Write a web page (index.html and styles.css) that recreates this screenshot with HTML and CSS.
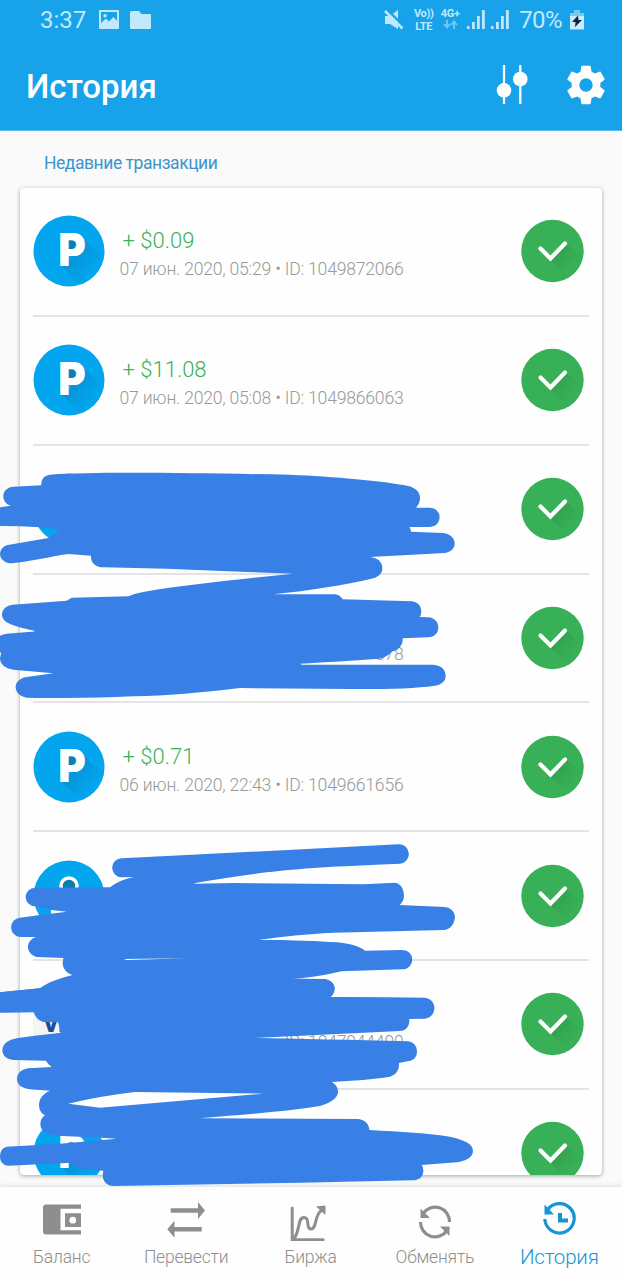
FILE: index.html
```html
<!DOCTYPE html>
<html lang="ru">
<head>
<meta charset="utf-8">
<title>История</title>
<link rel="stylesheet" href="styles.css">
</head>
<body>
<svg class="defs" width="0" height="0" aria-hidden="true">
  <defs>
    <linearGradient id="shade" x1="0" y1="0" x2="1" y2="1">
      <stop offset="0.2" stop-color="#0590d0"/>
      <stop offset="0.7" stop-color="#03a5ee"/>
    </linearGradient>
    <linearGradient id="gshade" x1="0" y1="0" x2="1" y2="1">
      <stop offset="0.1" stop-color="#309f4d"/>
      <stop offset="0.55" stop-color="#38b057"/>
    </linearGradient>
    <clipPath id="disc"><circle cx="36" cy="36" r="35.5"/></clipPath>
    <clipPath id="gdisc"><circle cx="31.500" cy="32" r="31"/></clipPath>
    <symbol id="payeer" viewBox="0 0 72 72">
      <circle cx="36" cy="36" r="35.5" fill="#03a5ee"/>
      <path d="M28 50 L34 51 L48 22 L72 44 V72 H50Z" fill="url(#shade)" clip-path="url(#disc)"/>
      <path d="M34 24h9v10h-9z" fill="#077fb8"/>
      <text x="25.300" y="51.300" class="logo-letter" textLength="27.500" lengthAdjust="spacingAndGlyphs">P</text>
    </symbol>
    <symbol id="ok" viewBox="0 0 64 64">
      <circle cx="31.500" cy="32" r="31.2" fill="#38b057"/>
      <path d="M29 41 L46 25 L68 47 V68 H56Z" fill="url(#gshade)" clip-path="url(#gdisc)"/>
      <path d="M19.500 29.500 L29.500 39.500 L44 24.500" fill="none" stroke="#fff" stroke-width="4.200" stroke-linecap="round"/>
    </symbol>
    <symbol id="bars" viewBox="0 0 18 20">
      <path d="M0 16h2.500v3H0zM5 12h2.800v7H5zM10 6h2.800v13H10zM15 0h2.800v19H15z" fill="#bfe8fb"/>
    </symbol>
  </defs>
</svg>

<div class="screen">
  <header class="top">
    <div class="status">
      <div class="status-left">
        <span class="clock">3:37</span>
        <svg class="i-photo" width="20" height="19" viewBox="0 0 20 19"><path fill="#c2e9fb" fill-rule="evenodd" d="M1 0h18a1 1 0 0 1 1 1v17a1 1 0 0 1-1 1H1a1 1 0 0 1-1-1V1a1 1 0 0 1 1-1zM2 2v11l5-4.500 3 3L14.500 7 18 11V2zM6 4a1.700 1.700 0 1 1 0 3.400A1.700 1.700 0 0 1 6 4z"/></svg>
        <svg class="i-folder" width="21" height="18" viewBox="0 0 21 18"><path fill="#c2e9fb" d="M1.500 0H9l2.500 3H20a1 1 0 0 1 1 1v12.500a1.500 1.500 0 0 1-1.500 1.500h-18A1.500 1.500 0 0 1 0 16.500v-15A1.500 1.500 0 0 1 1.500 0z"/></svg>
      </div>
      <div class="status-right">
        <svg class="mute" width="20" height="20" viewBox="0 0 20 20"><path fill="#c2e9fb" d="M1 6h5l8-6v19l-8-5H1z"/><path d="M2 -1.500 20 16.500" stroke="#17a2e9" stroke-width="2.500"/><path d="M1 1 18.500 18.500" stroke="#c2e9fb" stroke-width="2.500"/></svg>
        <span class="volte"><b>Vo))</b><b>LTE</b></span>
        <span class="net"><b>4G+</b><svg width="15" height="9" viewBox="0 0 15 9"><path d="M4 0v7M1 4l3 3.500L7 4M11 9V2M8 5l3-3.500L14 5" fill="none" stroke="#70c9f6" stroke-width="1.900"/></svg></span>
        <svg class="sig1" width="18" height="20"><use href="#bars"/></svg>
        <svg class="sig2" width="18" height="20"><use href="#bars"/></svg>
        <span class="pct">70%</span>
        <svg width="14" height="20" viewBox="0 0 14 20"><path fill="#78c9f2" d="M4 0h6v3h4v4H0V3h4z"/><path fill="#c9edfc" d="M0 6h14v13.500H0z"/><path fill="#0b2c3d" d="m8 5.500-6 6.500h3.500L5 17l7-7H8.500z"/></svg>
      </div>
    </div>
    <div class="bar">
      <h1>История</h1>
      <div class="actions">
        <svg width="32" height="40" viewBox="0 0 32 40"><path d="M8 0v39M24.300 0v39" stroke="#fff" stroke-width="2.300"/><circle cx="8" cy="25.300" r="7.300" fill="#fff"/><circle cx="24.300" cy="14" r="7.300" fill="#fff"/></svg>
        <svg width="46" height="46" viewBox="0 0 24 24"><path fill="#fff" d="M19.430 12.980c.04-.32.07-.64.07-.98s-.03-.66-.07-.98l2.110-1.650c.19-.15.24-.42.12-.64l-2-3.460c-.12-.22-.39-.3-.61-.22l-2.490 1c-.52-.4-1.080-.73-1.690-.98l-.38-2.650A.488.488 0 0 0 14 2h-4c-.25 0-.46.18-.49.42l-.38 2.650c-.61.25-1.170.59-1.690.98l-2.490-1c-.23-.09-.49 0-.61.22l-2 3.460c-.13.22-.07.49.12.64l2.110 1.650c-.04.32-.07.65-.07.98s.03.66.07.98l-2.110 1.650c-.19.15-.24.42-.12.64l2 3.460c.12.22.39.3.61.22l2.490-1c.52.4 1.080.73 1.690.98l.38 2.650c.03.24.24.42.49.42h4c.25 0 .46-.18.49-.42l.38-2.650c.61-.25 1.170-.59 1.690-.98l2.490 1c.23.09.49 0 .61-.22l2-3.460c.12-.22.07-.49-.12-.64zM12 15.500A3.500 3.500 0 1 1 12 8.500a3.500 3.500 0 0 1 0 7z"/></svg>
      </div>
    </div>
  </header>

  <main>
    <h2>Недавние транзакции</h2>
    <div class="card">
      <div class="row"><svg class="avatar"><use href="#payeer"/></svg><div class="info"><div class="sum">+ $0.09</div><div class="meta">07 июн. 2020, 05:29 • ID: 1049872066</div></div><svg class="ok"><use href="#ok"/></svg></div>
      <div class="row"><svg class="avatar"><use href="#payeer"/></svg><div class="info"><div class="sum">+ $11.08</div><div class="meta">07 июн. 2020, 05:08 • ID: 1049866063</div></div><svg class="ok"><use href="#ok"/></svg></div>
      <div class="row"><svg class="avatar"><use href="#payeer"/></svg><div class="info"></div><svg class="ok"><use href="#ok"/></svg></div>
      <div class="row"><svg class="avatar"><use href="#payeer"/></svg><div class="info raised"><div class="sum">&nbsp;</div><div class="meta end">678</div></div><svg class="ok"><use href="#ok"/></svg></div>
      <div class="row"><svg class="avatar"><use href="#payeer"/></svg><div class="info"><div class="sum">+ $0.71</div><div class="meta">06 июн. 2020, 22:43 • ID: 1049661656</div></div><svg class="ok"><use href="#ok"/></svg></div>
      <div class="row"><svg class="avatar" viewBox="0 0 72 72"><circle cx="36" cy="36" r="35.500" fill="#03a5ee"/><path d="M18 50h36v5H18z" fill="#fff"/><circle cx="36" cy="26" r="8" fill="#087fa8" stroke="#fff" stroke-width="3.500"/></svg><div class="info"></div><svg class="ok"><use href="#ok"/></svg></div>
      <div class="row"><div class="avatar visa">VISA</div><div class="info"><div class="sum">&nbsp;</div><div class="meta end">ID: 1047944490</div></div><svg class="ok"><use href="#ok"/></svg></div>
      <div class="row"><svg class="avatar"><use href="#payeer"/></svg><div class="info"></div><svg class="ok"><use href="#ok"/></svg></div>
    </div>
  </main>

  <nav>
    <div class="tab">
      <svg width="38" height="36" viewBox="0 0 38 36"><path fill="#8e8e8e" fill-rule="evenodd" d="M3 2.500h35v4.200H17.500v21.500H38v4.300H3a3 3 0 0 1-3-3v-24a3 3 0 0 1 3-3zM22 11.300h16V25H22zM29.800 14.800a3.400 3.400 0 1 0 0 6.800 3.400 3.400 0 0 0 0-6.800z"/></svg>
      <span>Баланс</span>
    </div>
    <div class="tab">
      <svg width="38" height="36" viewBox="0 0 38 36"><path fill="#8e8e8e" d="M3.700 6.200H31V0l7 8.500-7 8.500v-6.200H3.700zM34.700 29.500H7.500v6.200L.3 27.200l7.200-8.500V25h27.200z"/></svg>
      <span>Перевести</span>
    </div>
    <div class="tab">
      <svg class="chart" width="38" height="36" viewBox="0 0 38 36"><path d="M2.200 3v31.700h31" fill="none" stroke="#8e8e8e" stroke-width="3" stroke-linecap="round"/><path d="M3.500 34C10.500 27 7 12.500 14 12.500S15 24 21 24 24.500 9 31.500 5.500" fill="none" stroke="#8e8e8e" stroke-width="3"/><path fill="#8e8e8e" d="m26 1.500 9.500-1v9.500z"/></svg>
      <span>Биржа</span>
    </div>
    <div class="tab">
      <svg class="swap" width="34" height="34" viewBox="0 0 34 34"><g fill="none" stroke="#8e8e8e" stroke-width="3.200"><path d="M5 8.500A14.500 14.500 0 0 1 31.500 17"/><path d="M2.500 17A14.500 14.500 0 0 0 29 25.500"/></g><path fill="#8e8e8e" d="M2.500 3.500V13H12zM31.500 31v-9.500H22z"/></svg>
      <span>Обменять</span>
    </div>
    <div class="tab active">
      <svg width="34" height="34" viewBox="0 0 34 34"><path d="M5 8.500A14.700 14.700 0 1 1 2.800 17" fill="none" stroke="#1595d4" stroke-width="3.200"/><path fill="#1595d4" d="M2.500 2.500v10H12zM16 11h4v5.500h6v4H16z"/></svg>
      <span>История</span>
    </div>
  </nav>

  <!-- Marker strokes that hide private rows -->
  <svg class="marker" width="622" height="1280" viewBox="0 0 622 1280" aria-hidden="true">
    <path transform="translate(0 460) scale(.33333)" d="M150 44C300 34 600 40 870 44C1000 50 1150 62 1225 78C1250 84 1262 100 1260 118C1258 130 1255 135 1248 143L1290 143A29 29 0 0 1 1290 201L1228 201Q1233 206 1233 215L1330 219C1352 222 1364 235 1364 250C1364 266 1352 277 1335 279L1110 291C1135 293 1148 308 1147 326C1146 340 1136 350 1120 355C1040 375 930 392 820 403L1005 403Q1020 405 1028 418L1235 424C1255 426 1264 440 1264 455Q1264 464 1259 471L1285 472C1303 473 1315 486 1315 502C1315 520 1303 531 1285 532L1208 535C1210 555 1195 572 1175 575C1160 590 1150 595 1130 597C1060 602 980 607 900 611L905 614L1300 614C1325 616 1337 630 1337 647C1337 663 1325 674 1305 677C1240 686 1150 688 1050 687L720 684C600 698 500 707 400 709C300 714 200 715 80 713C60 710 47 697 47 682C47 667 58 656 75 652L160 640L40 629C15 626 0 612 0 595L3 580L0 575L0 527Q10 522 20 521L112 514C80 508 50 500 30 492C15 486 6 477 6 463C7 447 20 436 38 434L200 422L215 413L385 409Q400 402 430 396C560 374 720 358 880 341L740 336L500 326L310 322C285 321 272 308 273 287L205 282C150 290 90 305 35 310C15 310 0 297 0 281C2 265 12 256 28 254L145 234L180 208L118 202Q60 198 0 198L0 142L32 137C18 133 10 122 10 108C10 92 24 81 40 80L124 76C123 58 132 46 150 44Z"/>
    <path transform="translate(0 835) scale(.33333)" d="M365 70L1195 28A29 29 0 0 1 1200 86C1000 94 900 100 800 112C720 122 650 132 590 143L580 146L700 144L1090 148L1185 143C1203 144 1212 165 1212 183Q1211 200 1199 210L1335 216C1355 219 1365 232 1365 247C1362 270 1350 284 1333 285L1000 293C920 297 850 305 775 314C880 315 960 318 1010 322C1050 325 1080 335 1095 347L1208 345A29 29 0 0 1 1208 403L1025 409C980 420 930 428 870 433L970 432C990 433 1004 445 1004 463Q1002 478 991 486L1275 488C1293 490 1303 503 1303 520L1290 540L110 540L100 532L0 533L0 472L120 460C145 440 180 430 218 420C200 416 188 400 188 385L190 369L110 366C95 362 84 350 84 337C84 322 93 311 108 306L65 306A29 29 0 0 1 60 248L120 240L200 230L160 226L105 214A28 28 0 0 1 105 158L330 157C350 142 375 130 405 126L365 127A28 28 0 0 1 365 70Z"/>
    <path class="gap" transform="translate(0 835) scale(.33333)" d="M372 372L560 370L380 375Z"/>
    <path transform="translate(0 960) scale(.33333)" fill-rule="evenodd" d="M220 45L970 57C990 58 1004 70 1004 86Q1002 102 991 111L1270 114C1290 116 1303 128 1303 145C1303 162 1292 173 1275 176L1228 177C1229 200 1218 212 1200 213L765 234C900 236 1050 240 1225 244C1242 247 1251 259 1251 275C1251 292 1240 302 1222 304L1197 309C1199 330 1188 345 1170 350C1120 358 1060 362 995 366C1008 373 1015 384 1014 397C1013 415 990 430 960 438C880 452 750 462 600 475L1075 477C1095 479 1107 492 1108 510C1200 515 1290 520 1350 530C1395 540 1419 552 1419 573C1418 592 1400 602 1370 607L1265 615Q1270 620 1270 632C1270 650 1258 660 1238 661L900 668L340 678C320 677 308 663 308 645L310 632L240 627Q220 618 215 608L25 617C10 616 0 605 0 590Q0 565 20 560L180 551L350 536L305 533L170 527C135 524 121 510 121 492Q121 475 135 466C123 460 117 448 117 434C118 415 130 400 150 392L90 388C65 385 51 374 51 357C52 338 65 328 85 325L155 321Q145 315 138 302L40 300C20 298 7 287 7 270C9 250 25 240 50 235C90 228 140 223 182 218L174 187L130 186Q108 180 101 156L0 157L0 97L120 85ZM205 431Q300 408 405 396L790 401L300 443Z"/>
  </svg>
</div>
</body>
</html>
```
FILE: styles.css
```css
* { box-sizing: border-box; }
body { margin: 0; font-family: Roboto, "Open Sans", sans-serif; background: #fafafa; }
.defs { position: absolute; }
.screen { position: relative; width: 622px; height: 1280px; display: flex; flex-direction: column; overflow: hidden; }
svg { display: block; flex: none; }

.top { height: 131px; flex: none; background: #17a2e9; color: #fff; border-bottom: 1px solid #58bdf0; }
.status { height: 39px; display: flex; justify-content: space-between; align-items: center; padding: 0 38px 0 40px; color: #c2e9fb; font-size: 24px; font-weight: 400; }
.status-left, .status-right { display: flex; align-items: center; }
.i-photo { margin-left: 13px; }
.i-folder { margin-left: 11px; }
.volte, .net { display: flex; flex-direction: column; align-items: center; font-size: 11px; line-height: 13px; }
.volte { width: 21px; margin-left: 9px; white-space: nowrap; letter-spacing: -0.3px; }
.volte b, .net b { font-weight: 700; }
.net { width: 20px; margin-left: 6px; height: 25px; letter-spacing: -0.2px; }
.sig1 { margin-left: 7px; }
.sig2 { margin-left: 6px; }
.pct { margin: 0 8px 0 10px; letter-spacing: -0.6px; }

.bar { height: 91px; display: flex; justify-content: space-between; align-items: center; padding: 0 13px 0 26px; }
h1 { margin: 5px 0 0; font-size: 33px; font-weight: 500; line-height: 40px; }
.actions { display: flex; align-items: center; gap: 35px; }

main { flex: none; height: 1056px; padding: 0 20px; background: #fafafa; }
h2 { margin: 0; padding-left: 24px; height: 57px; line-height: 64px; font-size: 17.5px; letter-spacing: -0.45px; font-weight: 400; color: #3a95c9; }
.card { height: 987px; overflow: hidden; background: #fefefe; border-radius: 4px; box-shadow: 0 1px 4px rgba(0, 0, 0, 0.35); padding: 0 13px; }
.row { height: 128.85px; display: flex; align-items: center; border-bottom: 2px solid #e4e4e4; padding-right: 4px; }
.avatar { width: 72px; height: 72px; }
.logo-letter { font-family: Inter, sans-serif; font-weight: 900; font-size: 46px; fill: #fff; }
.visa { display: flex; align-items: center; padding-left: 11px; background: #f4f4f4; color: #204b96; font-family: "Open Sans", sans-serif; font-size: 20px; font-weight: 800; border-radius: 4px; }
.info { flex: 1; padding: 8px 0 0 14.5px; font-weight: 300; }
.raised { padding-top: 4px; }
.sum { font-size: 22px; line-height: 28px; padding-left: 3px; color: #3bb159; }
.meta { font-size: 17.6px; letter-spacing: -0.22px; line-height: 28px; color: #999; white-space: nowrap; width: 284px; }
.end { text-align: right; }
.ok { width: 64px; height: 64px; }

nav { flex: none; height: 93px; background: #fefefe; display: grid; grid-template-columns: repeat(5, 1fr); box-shadow: 0 -1px 5px rgba(0, 0, 0, 0.12); position: relative; }
.tab { display: flex; flex-direction: column; align-items: center; padding: 15px 1px 0 0; color: #8e8e8e; font-size: 17.5px; letter-spacing: -0.2px; font-weight: 300; }
.tab svg { margin-bottom: 7px; }
.tab .chart { margin: 3px 2px 4px 0; }
.tab .swap { margin: 3px 0 6px; }
.tab span { line-height: 24px; }
.active { color: #1595d4; font-size: 20.5px; }
.tab.active svg { margin: 0 0 9px; }

.marker { position: absolute; left: 0; top: 0; fill: #3880e6; }
.gap { fill: #fff; }
```
